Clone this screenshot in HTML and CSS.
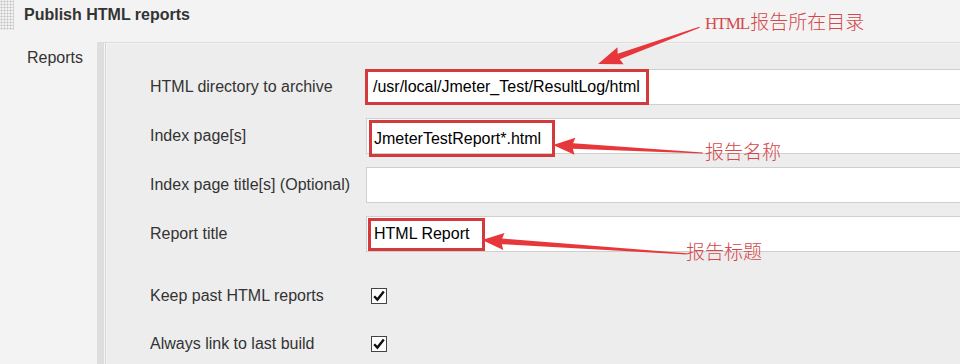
FILE: index.html
```html
<!DOCTYPE html>
<html lang="zh-CN">
<head>
  <meta charset="UTF-8">
  <title>Publish HTML reports</title>
  <link rel="stylesheet" href="styles.css">
</head>
<body>
  <div class="section-head">
    <span class="grip"></span>
    <h2 class="section-title">Publish HTML reports</h2>
  </div>

  <div class="section-body">
    <div class="side-label">Reports</div>
    <div class="panel">
      <div class="rows">
        <label class="row-label">HTML directory to archive</label>
        <div class="field"><span class="mark mark-dir">/usr/local/Jmeter_Test/ResultLog/html</span></div>

        <label class="row-label">Index page[s]</label>
        <div class="field"><span class="mark mark-index">JmeterTestReport*.html</span></div>

        <label class="row-label">Index page title[s] (Optional)</label>
        <div class="field"></div>

        <label class="row-label">Report title</label>
        <div class="field"><span class="mark mark-title">HTML Report</span></div>
      </div>

      <div class="checks">
        <label class="row-label">Keep past HTML reports</label>
        <span class="check"><svg width="16" height="16" viewBox="0 0 16 16"><rect x="0.5" y="0.5" width="15" height="15" fill="#fff" stroke="#444"/><path d="M3.2 8.2 L6.4 11.6 L12.8 3.6" fill="none" stroke="#111" stroke-width="2.4"/></svg></span>

        <label class="row-label">Always link to last build</label>
        <span class="check"><svg width="16" height="16" viewBox="0 0 16 16"><rect x="0.5" y="0.5" width="15" height="15" fill="#fff" stroke="#444"/><path d="M3.2 8.2 L6.4 11.6 L12.8 3.6" fill="none" stroke="#111" stroke-width="2.4"/></svg></span>
      </div>
    </div>
  </div>

  <!-- annotations drawn over the screenshot -->
  <svg class="arrows" width="960" height="364" viewBox="0 0 960 364">
    <path transform="translate(598 64) rotate(-19.9)" d="M0 0 L24 -9 L22 -3 L108 -0.6 L108 0.6 L22 3 L24 9 Z" fill="#e8373a"/>
    <path transform="translate(553 145) rotate(3.05)" d="M0 0 L22 -8.5 L20 -2.8 L150 -0.6 L150 0.6 L20 2.8 L22 8.5 Z" fill="#e8373a"/>
    <path transform="translate(482 240) rotate(3.9)" d="M0 0 L22 -8.5 L20 -2.8 L205 -0.6 L205 0.6 L20 2.8 L22 8.5 Z" fill="#e8373a"/>
  </svg>
  <span class="note note-dir"><span class="note-latin">HTML</span>报告所在目录</span>
  <span class="note note-index">报告名称</span>
  <span class="note note-title">报告标题</span>
</body>
</html>
```

FILE: styles.css
```css
body { margin: 0; background: #f3f3f3; font-family: "Liberation Sans", Arial, sans-serif; font-size: 16px; color: #333; overflow: hidden; position: relative; width: 960px; height: 364px; }

.section-head { display: flex; align-items: center; height: 30px; }
.grip { width: 14px; height: 30px; background-image: radial-gradient(circle, #c8c8c8 0.9px, transparent 1.2px); background-size: 3px 3px; }
.section-title { margin: 0 0 0 10px; font-size: 16px; font-weight: bold; color: #333; line-height: 20px; }

.section-body { display: flex; margin-top: 12px; }
.side-label { width: 70px; padding: 6px 0 0 27px; line-height: 20px; flex: none; }

.panel { box-sizing: border-box; flex: 1; margin-right: -20px; background: #ededed; border-top: 1px solid #dcdcdc; border-left: 7px solid #dedede; box-shadow: inset 1px 0 #f6f6f6, inset 2px 0 #d4d4d4, inset 3px 1px #f4f4f4; padding: 26px 0 0 46px; height: 322px; }

.rows { display: grid; grid-template-columns: 216px 1fr; grid-auto-rows: 36px; row-gap: 13px; }
.row-label { display: flex; align-items: center; line-height: 20px; }
.field { box-sizing: border-box; height: 36px; background: #fff; border: 1px solid #cfcfcf; display: flex; align-items: center; color: #000; }

.mark { box-sizing: border-box; display: inline-flex; align-items: center; border: 3px solid #d4393c; white-space: nowrap; }
.mark-dir { height: 36px; margin-left: -2px; padding: 0 6px 0 5px; }
.mark-index { height: 37px; align-self: flex-start; margin: 1px 0 0 2px; padding: 0 11px 0 2px; }
.mark-title { height: 33px; margin-left: 1px; padding: 0 13px 0 3px; }

.checks { display: grid; grid-template-columns: 221px 1fr; grid-auto-rows: 36px; row-gap: 12px; margin-top: 26px; }
.check { display: flex; align-items: center; }
.check svg { display: block; }

.arrows { position: absolute; left: 0; top: 0; pointer-events: none; }
.note { position: absolute; color: #d4474a; font-family: "Noto Sans CJK SC", sans-serif; font-size: 19px; line-height: 24px; white-space: nowrap; font-weight: 300; }
.note-latin { font-family: "Liberation Serif", serif; font-size: 17px; letter-spacing: -1px; margin-right: 1px; }
.note-dir { left: 705px; top: 9px; }
.note-index { left: 705px; top: 139px; }
.note-title { left: 686px; top: 239px; }
```
